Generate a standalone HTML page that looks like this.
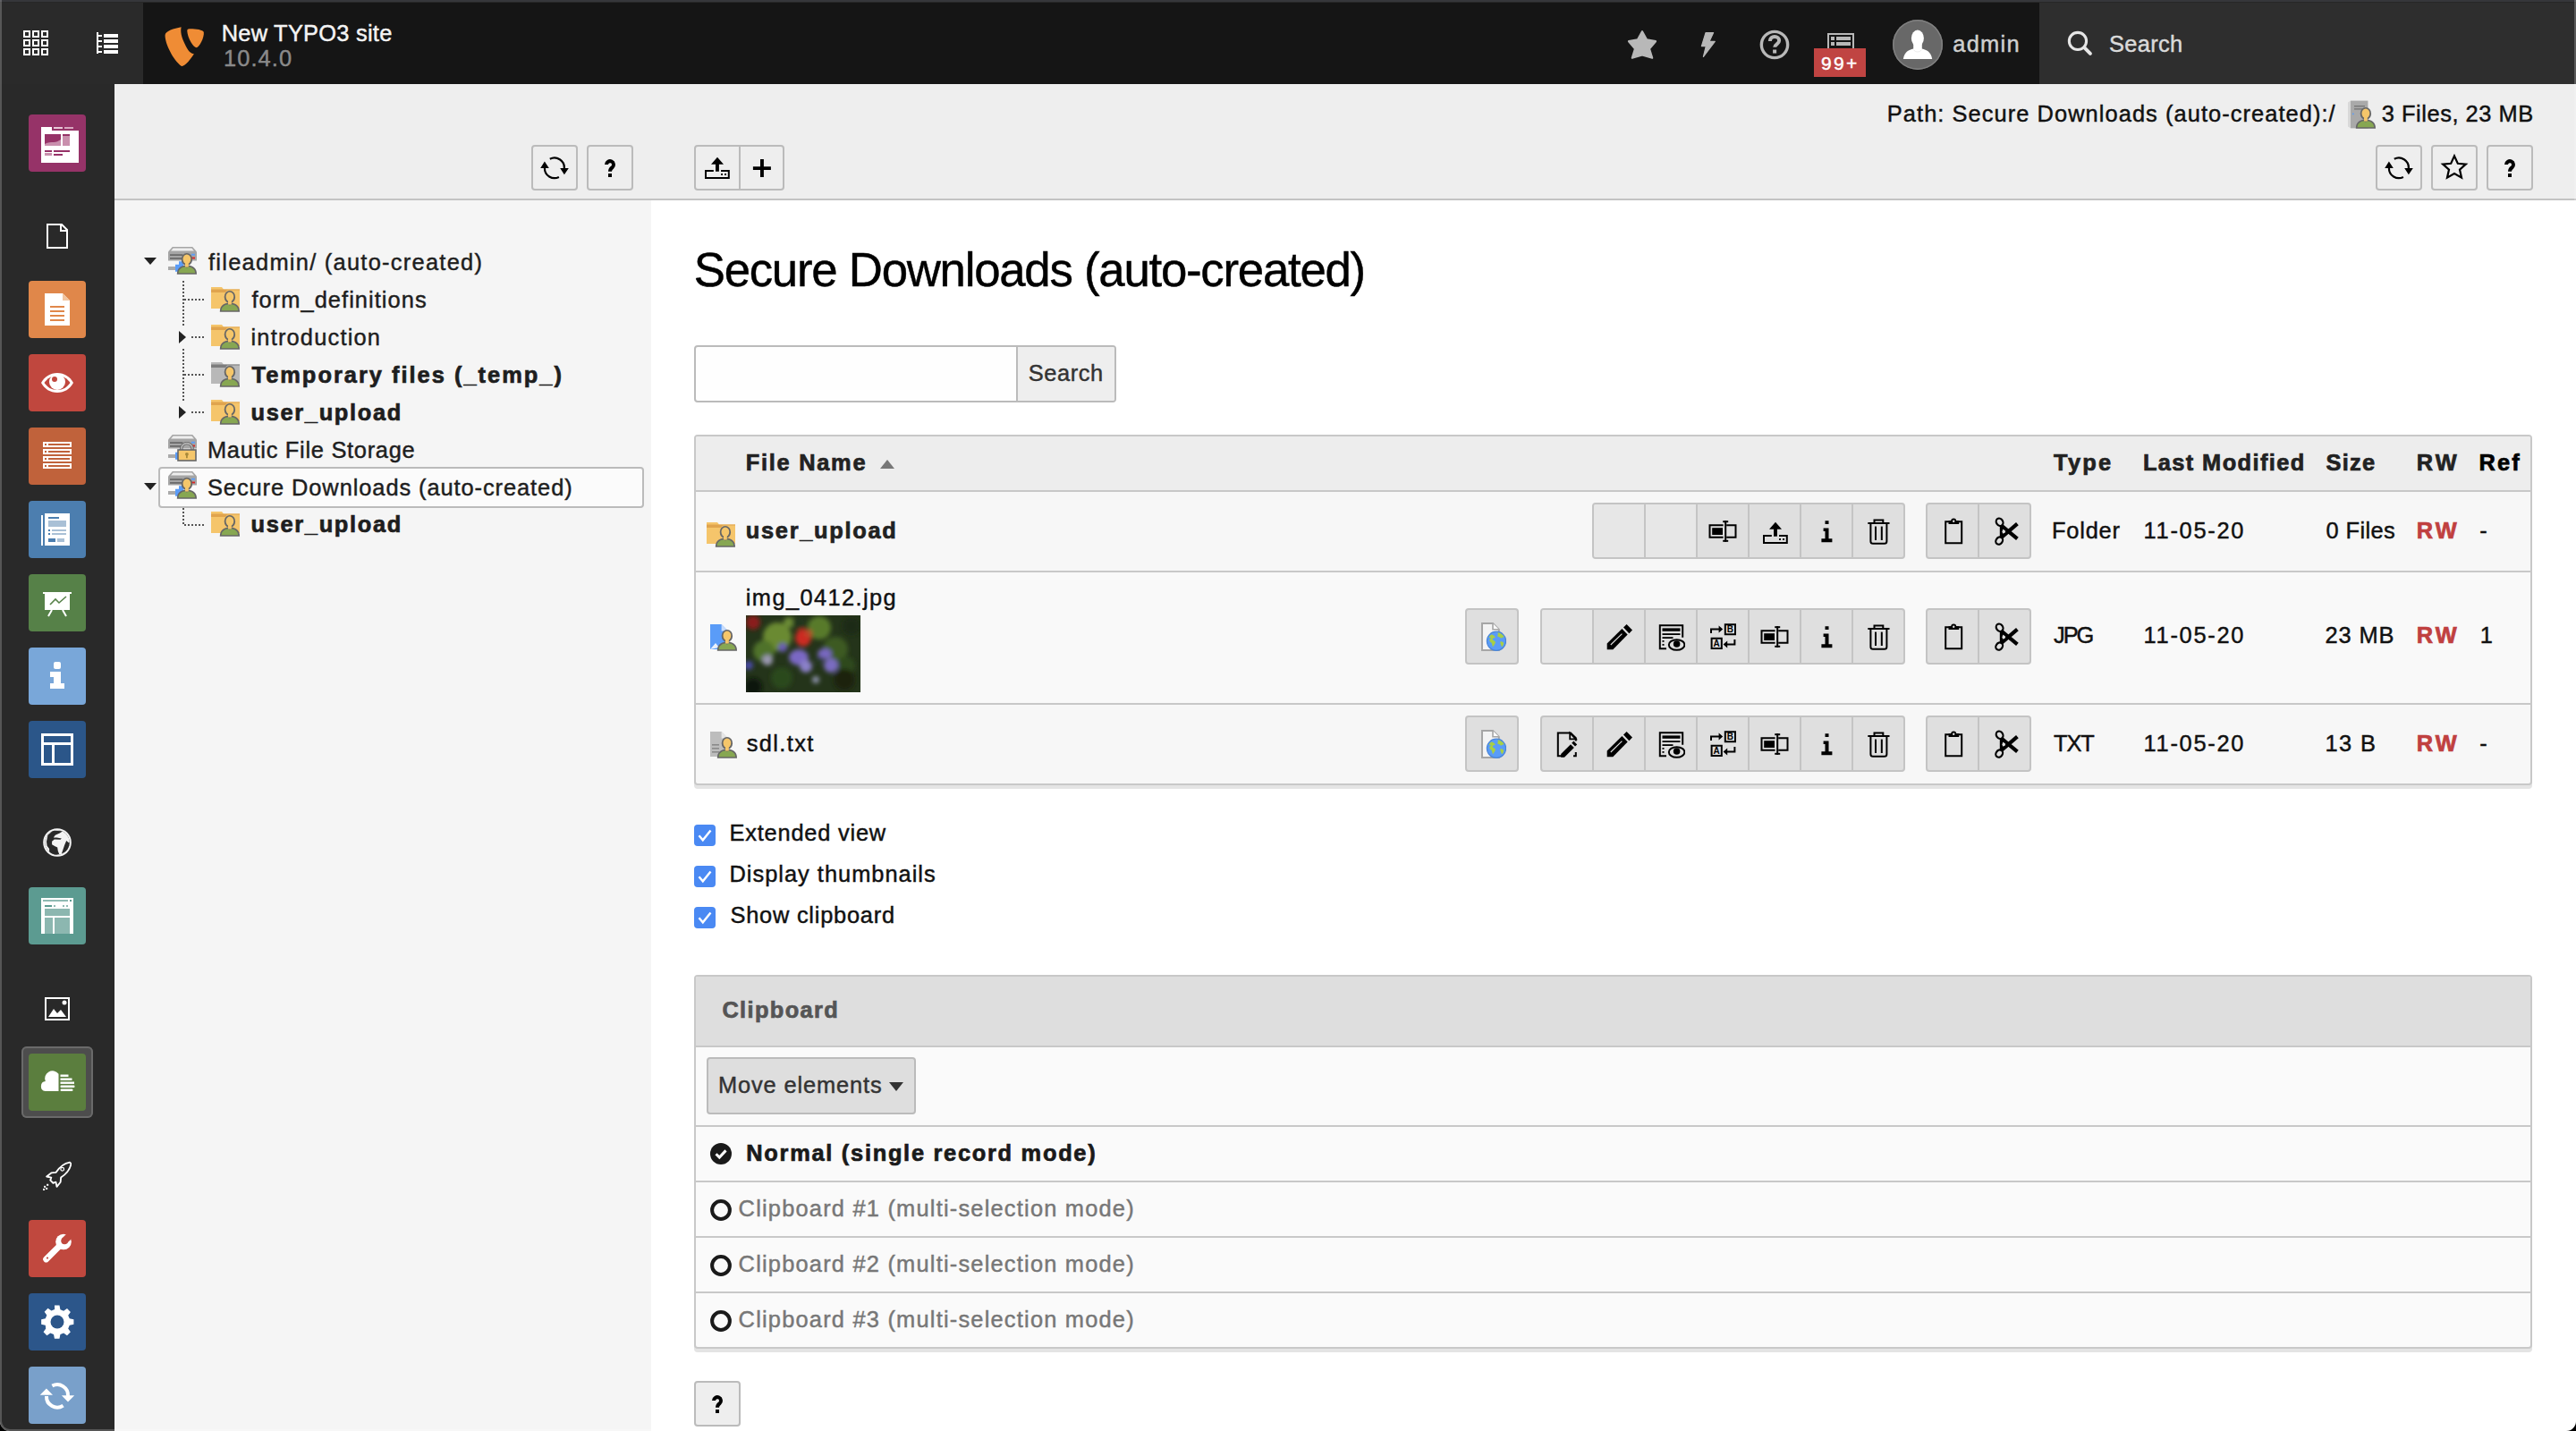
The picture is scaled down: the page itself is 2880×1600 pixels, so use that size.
<!DOCTYPE html>
<html><head><meta charset="utf-8"><style>
html,body{margin:0;padding:0;background:#000;}
body{width:2880px;height:1600px;overflow:hidden;position:relative;font-family:"Liberation Sans",sans-serif;}
.a{position:absolute;}
.t{white-space:pre;line-height:1;-webkit-text-stroke:0.45px currentColor;}
.b{-webkit-text-stroke:0.7px currentColor;}
#pg{position:absolute;left:0;top:0;width:2880px;height:1600px;overflow:hidden;border-radius:0 0 11px 11px;background:#fff;}
</style></head><body><div id="pg">
<div class="a" style="left:0px;top:0px;width:2880px;height:2px;background:#36373b"></div>
<div class="a" style="left:0px;top:2px;width:2880px;height:1px;background:#272727"></div>
<div class="a" style="left:0px;top:3px;width:160px;height:91px;background:#2a2a2a"></div>
<div class="a" style="left:160px;top:3px;width:2120px;height:91px;background:#151515"></div>
<div class="a" style="left:2280px;top:3px;width:600px;height:91px;background:#2e2e2e"></div>
<svg class="a" style="left:26px;top:34px" width="28" height="28" viewBox="0 0 28 28"><rect x="1" y="1" width="6" height="6" fill="none" stroke="#fff" stroke-width="2"/><rect x="1" y="11" width="6" height="6" fill="none" stroke="#fff" stroke-width="2"/><rect x="1" y="21" width="6" height="6" fill="none" stroke="#fff" stroke-width="2"/><rect x="11" y="1" width="6" height="6" fill="none" stroke="#fff" stroke-width="2"/><rect x="11" y="11" width="6" height="6" fill="none" stroke="#fff" stroke-width="2"/><rect x="11" y="21" width="6" height="6" fill="none" stroke="#fff" stroke-width="2"/><rect x="21" y="1" width="6" height="6" fill="none" stroke="#fff" stroke-width="2"/><rect x="21" y="11" width="6" height="6" fill="none" stroke="#fff" stroke-width="2"/><rect x="21" y="21" width="6" height="6" fill="none" stroke="#fff" stroke-width="2"/></svg>
<svg class="a" style="left:107px;top:36px" width="26" height="24" viewBox="0 0 26 24"><rect x="1" y="0" width="2" height="24" fill="#fff"/><rect x="1" y="3" width="6" height="2" fill="#fff"/><rect x="1" y="9" width="6" height="2" fill="#fff"/><rect x="1" y="15" width="6" height="2" fill="#fff"/><rect x="1" y="21" width="6" height="2" fill="#fff"/><rect x="9" y="2" width="16" height="4" fill="#fff"/><rect x="9" y="8" width="16" height="4" fill="#fff"/><rect x="9" y="14" width="16" height="4" fill="#fff"/><rect x="9" y="20" width="16" height="4" fill="#fff"/></svg>
<svg class="a" style="left:176px;top:24px" width="60" height="56" viewBox="0 0 60 56"><path fill="#ef8c35" d="M26.6,6.3 C18,8 9.5,10.5 8.6,15 C8,24 18,44 27,49.9 C31,50.5 37,42 40.9,36.2 C38,36 35,34 32,28 C29,22 25,14 26.6,6.3 Z"/><path fill="#ef8c35" d="M34.5,8.4 C40,8 51,9 51.8,12 C52.5,18 47,28.5 43.8,29.2 C40,29.2 34,19 33.3,11 C33.2,9.5 33.6,8.5 34.5,8.4 Z"/></svg>
<div class="a t" style="left:247.70px;top:24.80px;font-size:25.4px;font-weight:400;color:#f4f4f4;letter-spacing:0.258px;">New TYPO3 site</div>
<div class="a t" style="left:249.90px;top:53.00px;font-size:25.4px;font-weight:400;color:#8a8a8a;letter-spacing:1.126px;">10.4.0</div>
<svg class="a" style="left:1816px;top:30px;" width="40" height="40" viewBox="0 0 40 40"><path fill="#b8b8b8" stroke="#b8b8b8" stroke-width="2.200" stroke-linejoin="round" d="M20 5.200L25 14.400 35 16.200 28 24.600 31.200 34.800 20 31.400 8.800 34.800 12 24.600 5 16.200 15 14.400Z"/></svg>
<svg class="a" style="left:1896px;top:30px;" width="28" height="40" viewBox="0 0 28 40"><path fill="#b8b8b8" stroke="#b8b8b8" stroke-width="1.200" stroke-linejoin="round" d="M11 6.600H19.600L15 16.400H21.300L8.400 33.400 11.300 21.600H6.400Z"/></svg>
<svg class="a" style="left:1967px;top:33px;" width="34" height="34" viewBox="0 0 16 16"><circle cx="8" cy="8" r="6.9" fill="none" stroke="#b8b8b8" stroke-width="1.6"/><path fill="none" stroke="#b8b8b8" stroke-width="1.9" d="M5.6 6.1c0-1.5 1.1-2.3 2.4-2.3 1.4 0 2.4.9 2.4 2.1 0 1.7-2.3 1.8-2.3 3.4"/><rect x="7.1" y="10.6" width="1.9" height="1.9" fill="#b8b8b8"/></svg>
<svg class="a" style="left:2043px;top:37px;" width="30" height="18" viewBox="0 0 15 9"><path fill="none" stroke="#b8b8b8" stroke-width="1" d="M.5 .5h14v9h-14z"/><rect x="2" y="2" width="2" height="2" fill="#b8b8b8"/><rect x="5" y="2" width="8" height="2" fill="#b8b8b8"/><rect x="2" y="5" width="2" height="2" fill="#b8b8b8"/><rect x="5" y="5" width="8" height="2" fill="#b8b8b8"/></svg>
<div class="a" style="left:2028px;top:54px;width:58px;height:32px;background:#c04442"></div>
<div class="a t" style="left:2036.00px;top:59.50px;font-size:21px;font-weight:400;color:#fff;letter-spacing:2.321px;">99+</div>
<div class="a" style="left:2116px;top:22px;width:56px;height:56px;background:#686868;border-radius:50%;box-shadow:inset 0 0 0 1.500px #808080"></div>
<svg class="a" style="left:2116px;top:22px;" width="56" height="56" viewBox="0 0 56 56"><ellipse cx="27.900" cy="20.800" rx="7" ry="9.200" fill="#fff"/><rect x="23.200" y="26" width="9.600" height="9" fill="#fff"/><path fill="#fff" d="M23.200 32.600C18 34 13.500 35.500 11.800 44H44.200C42.500 35.500 38 34 32.800 32.600z"/><path fill="none" stroke="#ddd" stroke-width=".6" d="M23.300 33.600c1.500 1.800 3 2.400 4.600 2.400s3.100-.6 4.600-2.400"/></svg>
<div class="a t" style="left:2183.30px;top:37.00px;font-size:25.4px;font-weight:400;color:#cfcfcf;letter-spacing:1.267px;">admin</div>
<svg class="a" style="left:2311px;top:34px;" width="29" height="29" viewBox="0 0 16 16"><circle cx="6.6" cy="6.6" r="5.3" fill="none" stroke="#e6e6e6" stroke-width="1.7"/><path stroke="#e6e6e6" stroke-width="2.2" stroke-linecap="round" d="M10.6 10.6l3.7 3.7"/></svg>
<div class="a t" style="left:2358.00px;top:37.00px;font-size:25.4px;font-weight:400;color:#dadada;letter-spacing:0.334px;">Search</div>
<div class="a" style="left:0px;top:94px;width:128px;height:1506px;background:#292929"></div>
<svg class="a" style="left:32px;top:128px;" width="64" height="64" viewBox="0 0 64 64"><rect width="64" height="64" rx="4" fill="#963368"/><path fill="#fff" d="M14 14h12v4h30v36H14z"/><rect x="28" y="14" width="10" height="2" fill="#e8c8d8"/><rect x="40" y="14" width="10" height="2" fill="#d8a8c0"/><path fill="#c98fad" d="M18 22h18v13H18z"/><path fill="#963368" d="M18 22h18v6c-3 2-5 3-8 3-3 0-6 0-10 2z"/><rect x="38" y="22" width="8" height="13" fill="#c98fad"/><rect x="38" y="22" width="8" height="2" fill="#963368"/><rect x="18" y="40" width="8" height="2" fill="#963368"/><rect x="18" y="43" width="8" height="3" fill="#c98fad"/><rect x="28" y="40" width="18" height="2" fill="#963368"/><rect x="28" y="44" width="10" height="2" fill="#963368"/></svg>
<svg class="a" style="left:52px;top:250px;" width="24" height="28" viewBox="0 0 24 28"><path fill="none" stroke="#fff" stroke-width="2" d="M1 1h16l6 6v20H1z M16 1v7h7"/></svg>
<svg class="a" style="left:32px;top:314px;" width="64" height="64" viewBox="0 0 64 64"><rect width="64" height="64" rx="4" fill="#e0874a"/><path fill="#fff" d="M18 14h20l8 8v28H18z"/><path fill="#f2c49e" d="M38 14l8 8h-8z"/><g fill="#e0874a"><rect x="24" y="28" width="16" height="2"/><rect x="24" y="33" width="16" height="2"/><rect x="24" y="38" width="16" height="2"/><rect x="24" y="43" width="16" height="2"/></g></svg>
<svg class="a" style="left:32px;top:396px;" width="64" height="64" viewBox="0 0 64 64"><rect width="64" height="64" rx="4" fill="#c0473e"/><path fill="#fff" d="M14 32c4-7 10-11 18-11s14 4 18 11c-4 7-10 11-18 11s-14-4-18-11z"/><path fill="#c0473e" d="M17.5 32c3.5-5 8-8 14.5-8s11 3 14.5 8c-3.5 5-8 8-14.5 8s-11-3-14.5-8z"/><circle cx="32" cy="31" r="9" fill="#fff"/><circle cx="29" cy="28" r="3" fill="#c0473e"/></svg>
<svg class="a" style="left:32px;top:478px;" width="64" height="64" viewBox="0 0 64 64"><rect width="64" height="64" rx="4" fill="#c0623b"/><g fill="#fff"><rect x="16" y="16" width="32" height="6"/><rect x="16" y="24" width="32" height="6"/><rect x="16" y="32" width="32" height="6"/><rect x="16" y="40" width="32" height="6"/></g><g fill="#c0623b"><rect x="18" y="18" width="2" height="2"/><rect x="18" y="26" width="2" height="2"/><rect x="18" y="34" width="2" height="2"/><rect x="18" y="42" width="2" height="2"/><rect x="22" y="18" width="24" height="2"/><rect x="22" y="26" width="24" height="2"/><rect x="22" y="34" width="24" height="2"/><rect x="22" y="42" width="24" height="2"/></g></svg>
<svg class="a" style="left:32px;top:560px;" width="64" height="64" viewBox="0 0 64 64"><rect width="64" height="64" rx="4" fill="#4c7eaf"/><rect x="14" y="16" width="2" height="34" fill="#fff"/><path fill="#fff" d="M18 14h28v36H18z"/><rect x="22" y="18" width="12" height="2" fill="#4c7eaf"/><rect x="22" y="22" width="20" height="7" fill="#a9c0d6"/><rect x="22" y="32" width="2" height="2" fill="#4c7eaf"/><rect x="26" y="32" width="16" height="2" fill="#a9c0d6"/><rect x="22" y="36" width="2" height="2" fill="#4c7eaf"/><rect x="26" y="36" width="16" height="2" fill="#a9c0d6"/><rect x="22" y="42" width="8" height="4" fill="#4c7eaf"/><rect x="32" y="42" width="8" height="4" fill="#a9c0d6"/></svg>
<svg class="a" style="left:32px;top:642px;" width="64" height="64" viewBox="0 0 64 64"><rect width="64" height="64" rx="4" fill="#568148"/><rect x="16" y="20" width="32" height="2" fill="#fff"/><rect x="18" y="22" width="28" height="18" fill="#fff"/><path fill="none" stroke="#568148" stroke-width="1.6" d="M24 34l6-6 4 4 8-7"/><path stroke="#fff" stroke-width="2" d="M26 40l-4 7M38 40l4 7"/></svg>
<svg class="a" style="left:32px;top:724px;" width="64" height="64" viewBox="0 0 64 64"><rect width="64" height="64" rx="4" fill="#79a7d9"/><g fill="#fff"><rect x="28" y="16" width="8" height="8" rx="2"/><path d="M24 27h12v13h4v6H24v-6h4v-7h-4z"/></g></svg>
<svg class="a" style="left:32px;top:806px;" width="64" height="64" viewBox="0 0 64 64"><rect width="64" height="64" rx="4" fill="#2b5689"/><path fill="#fff" d="M14 14h36v36H14z"/><path fill="#2b5689" d="M17 17h30v7H17zM17 27h9v20h-9zM29 27h18v20H29z"/></svg>
<svg class="a" style="left:48px;top:926px;" width="32" height="32" viewBox="0 0 32 32"><circle cx="16" cy="16" r="15.800" fill="#f4f4f4"/><circle cx="16" cy="16" r="13.700" fill="#292929"/><clipPath id="gc"><circle cx="16" cy="16" r="13.700"/></clipPath><g clip-path="url(#gc)"><path fill="#f4f4f4" d="M0 0h32v32H0z"/><path fill="#292929" d="M10.800 2.700L22.200 3.200 18.800 5.400 13.800 7.800 11.800 10.500 15.500 10.500 20.900 11.500 19.500 12.800 12.800 12.500 10.100 14.800 10.100 18.200 13.500 20.200 16.200 21.500 16.800 25.600 18.200 28.900 12.100 31 7.100 26.600 7.100 22.900 4.600 19.800 4 15 5.500 7.400 8.100 5.400Z"/><path fill="#292929" d="M26.200 14.100L28.900 16.200 30.500 15 30 22.200 25.200 26.600 20.900 28.400 24.200 18.800Z"/></g></svg>
<svg class="a" style="left:32px;top:992px;" width="64" height="64" viewBox="0 0 64 64"><rect width="64" height="64" rx="4" fill="#5c9b91"/><path fill="#fff" d="M14 12h36v40H14z"/><rect x="16" y="14" width="28" height="2" fill="#8fbab3"/><rect x="46" y="14" width="2" height="2" fill="#5c9b91"/><rect x="18" y="20" width="8" height="2" fill="#5c9b91"/><rect x="28" y="20" width="2" height="2" fill="#8fbab3"/><rect x="38" y="20" width="2" height="2" fill="#8fbab3"/><rect x="42" y="20" width="2" height="2" fill="#8fbab3"/><rect x="18" y="24" width="28" height="8" fill="#8cb7b0"/><rect x="18" y="34" width="9" height="18" fill="#8cb7b0"/><rect x="29" y="34" width="17" height="18" fill="#8cb7b0"/></svg>
<svg class="a" style="left:50px;top:1115px;" width="28" height="26" viewBox="0 0 28 26"><path fill="none" stroke="#fff" stroke-width="2" d="M1 1h26v24H1z"/><path fill="#fff" d="M4 22l6-9 4 5 4-4 6 8z"/><circle cx="22" cy="6" r="2.5" fill="#fff"/></svg>
<div class="a" style="left:24px;top:1170px;width:80px;height:80px;background:#4d4d4d;border-radius:6px;box-shadow:inset 0 0 0 2px #6a6a6a"></div>
<svg class="a" style="left:32px;top:1178px;" width="64" height="64" viewBox="0 0 64 64"><rect width="64" height="64" rx="4" fill="#5b7e3e"/><path fill="#fff" d="M33.500 42H18.500A5.500 5.500 0 0 1 18.800 31.100A8.500 8.500 0 0 1 33.500 22.800Z"/><g fill="#fff"><rect x="35.500" y="23.500" width="9" height="2.400"/><rect x="35.500" y="27.500" width="13" height="2.400"/><rect x="35.500" y="31.500" width="15.500" height="2.400"/><rect x="35.500" y="35.500" width="16" height="2.400" rx="1"/><rect x="35.500" y="39.500" width="14" height="2.500" rx="1.200"/></g></svg>
<svg class="a" style="left:47px;top:1298px;" width="33" height="33" viewBox="0 0 32 32"><path fill="none" stroke="#fff" stroke-width="1.8" stroke-linejoin="round" d="M30 1.5c-6 1-11 5-15 11l-5 .5-5 4 5 1-1 3 3 3 3-1 1 5 4-5 .5-5c6-4 10-9 11-15z"/><circle cx="22" cy="9" r="1.8" fill="none" stroke="#fff" stroke-width="1.2"/><g fill="#fff"><rect x="2" y="27" width="2" height="2"/><rect x="4" y="29" width="2" height="2"/><rect x="1" y="30" width="2" height="2"/><rect x="5" y="25" width="2" height="2"/></g></svg>
<svg class="a" style="left:32px;top:1364px;" width="64" height="64" viewBox="0 0 64 64"><rect width="64" height="64" rx="4" fill="#c0483e"/><mask id="wm"><rect width="64" height="64" fill="#fff"/><circle cx="40.200" cy="23.300" r="3.900" fill="#000"/><rect x="36.300" y="9" width="7.800" height="14.300" fill="#000" transform="rotate(45 40.200 23.300)"/></mask><g mask="url(#wm)"><circle cx="39" cy="24.500" r="8.800" fill="#fff"/></g><path stroke="#fff" stroke-width="6.800" stroke-linecap="round" d="M34 29.600L19.600 44"/><circle cx="21" cy="42.600" r="1.100" fill="#c0483e"/></svg>
<svg class="a" style="left:32px;top:1446px;" width="64" height="64" viewBox="0 0 64 64"><rect width="64" height="64" rx="4" fill="#2c568a"/><g transform="translate(32 32) scale(.925) translate(-32.300 -32)"><path fill="#fff" d="M29 15h6l1 5 4 1.7 4.200-2.900 4.200 4.200-2.900 4.200L47.200 31l5 1v6l-5 1-1.700 4 2.900 4.200-4.200 4.200-4.200-2.900-4 1.700-1 5h-6l-1-5-4-1.700-4.200 2.900-4.200-4.200 2.900-4.200L18 39l-5-1v-6l5-1 1.700-4-2.900-4.200 4.200-4.200 4.200 2.900 4-1.700z" transform="translate(0,-3)"/></g><circle cx="32" cy="32" r="7.500" fill="#2c568a"/></svg>
<svg class="a" style="left:32px;top:1528px;" width="64" height="64" viewBox="0 0 64 64"><rect width="64" height="64" rx="4" fill="#79a0ca"/><path fill="none" stroke="#fff" stroke-width="4" d="M26.400 21.500A12 12 0 0 1 44 33M20 33A12 12 0 0 0 38.600 43.600"/><path fill="#fff" d="M36.900 32.200h14.300L44 39.400zM12.700 31.800h14.300L19.900 24.600z"/></svg>
<div class="a" style="left:128px;top:94px;width:2752px;height:128px;background:#eeeeee"></div>
<div class="a" style="left:128px;top:222px;width:2752px;height:2px;background:#c3c3c3"></div>
<div class="a" style="left:594px;top:162px;width:52px;height:51px;background:#eeeeee;border:2px solid #bbbbbb;border-radius:4px;box-sizing:border-box"></div>
<svg class="a" style="left:604px;top:171px;" width="32" height="32" viewBox="0 0 16 16"><path fill="none" stroke="#000" stroke-width="1.1" d="M5.400 3.400A5.500 5.500 0 0 1 13.450 8.500M2.450 8.500A5.500 5.500 0 0 0 10.450 13.450"/><path d="M11.100 8.500h4.800l-2.450 3.600zM.1 8.500h4.800L2.450 4.700z"/></svg>
<div class="a" style="left:656px;top:162px;width:52px;height:51px;background:#eeeeee;border:2px solid #bbbbbb;border-radius:4px;box-sizing:border-box"></div>
<svg class="a" style="left:666px;top:171px;" width="32" height="32" viewBox="0 0 16 16"><path fill="none" stroke="#000" stroke-width="2" d="M6 6.500A2 2 0 1 1 9.300 8.100C8.400 8.800 8 9.300 8 10.400"/><rect x="7" y="11.500" width="2" height="2"/></svg>
<div class="a" style="left:776px;top:162px;width:101px;height:51px;background:#eeeeee;border:2px solid #bbbbbb;border-radius:4px;box-sizing:border-box"></div>
<div class="a" style="left:826px;top:162px;width:2px;height:51px;background:#bbbbbb"></div>
<svg class="a" style="left:785px;top:170px;" width="32" height="32" viewBox="0 0 16 16"><path d="M8.500 2.900L12 6.900H9.450V10.900H7.500V6.900H5z"/><path fill="none" stroke="#000" stroke-width="1" d="M6.400 10.500H2v4h12.900v-4h-4.400"/><rect x="10.550" y="12" width=".95" height="1"/><rect x="12.550" y="12" width=".95" height="1"/></svg>
<svg class="a" style="left:836px;top:170px;" width="32" height="32" viewBox="0 0 16 16"><path d="M7 4h1.950v4.100h4v1.900h-4v3.950H7V10H2.950V8.100H7z"/></svg>
<div class="a" style="left:2656px;top:162px;width:52px;height:51px;background:#eeeeee;border:2px solid #bbbbbb;border-radius:4px;box-sizing:border-box"></div>
<svg class="a" style="left:2666px;top:171px;" width="32" height="32" viewBox="0 0 16 16"><path fill="none" stroke="#000" stroke-width="1.1" d="M5.400 3.400A5.500 5.500 0 0 1 13.450 8.500M2.450 8.500A5.500 5.500 0 0 0 10.450 13.450"/><path d="M11.100 8.500h4.800l-2.450 3.600zM.1 8.500h4.800L2.450 4.700z"/></svg>
<div class="a" style="left:2718px;top:162px;width:52px;height:51px;background:#eeeeee;border:2px solid #bbbbbb;border-radius:4px;box-sizing:border-box"></div>
<svg class="a" style="left:2728px;top:171px;" width="32" height="32" viewBox="0 0 16 16"><path fill="none" stroke="#000" stroke-width="1.1" stroke-linejoin="miter" d="M8 1.700l1.900 4.200 4.500.4-3.400 3 1 4.500L8 11.500l-4 2.300 1-4.500-3.400-3 4.500-.4z"/></svg>
<div class="a" style="left:2780px;top:162px;width:52px;height:51px;background:#eeeeee;border:2px solid #bbbbbb;border-radius:4px;box-sizing:border-box"></div>
<svg class="a" style="left:2790px;top:171px;" width="32" height="32" viewBox="0 0 16 16"><path fill="none" stroke="#000" stroke-width="2" d="M6 6.500A2 2 0 1 1 9.300 8.100C8.400 8.800 8 9.300 8 10.400"/><rect x="7" y="11.500" width="2" height="2"/></svg>
<div class="a t" style="left:2109.80px;top:115.30px;font-size:25.4px;font-weight:400;color:#111;letter-spacing:1.073px;">Path: Secure Downloads (auto-created):/</div>
<div class="a t" style="left:2662.70px;top:115.30px;font-size:25.4px;font-weight:400;color:#111;letter-spacing:0.559px;">3 Files, 23 MB</div>
<div class="a" style="left:128px;top:224px;width:600px;height:1376px;background:#f5f5f5"></div>
<div class="a" style="left:177px;top:522px;width:543px;height:46px;background:#fbfbfb;border:2px solid #bbbbbb;border-radius:4px;box-sizing:border-box"></div>
<svg class="a" style="left:161px;top:288px;" width="14" height="8" viewBox="0 0 14 8"><path fill="#222" d="M0 0h14L7 8z"/></svg>
<svg class="a" style="left:161px;top:540px;" width="14" height="8" viewBox="0 0 14 8"><path fill="#222" d="M0 0h14L7 8z"/></svg>
<svg class="a" style="left:200px;top:370px;" width="8" height="14" viewBox="0 0 8 14"><path fill="#222" d="M0 0l8 7-8 7z"/></svg>
<svg class="a" style="left:200px;top:454px;" width="8" height="14" viewBox="0 0 8 14"><path fill="#222" d="M0 0l8 7-8 7z"/></svg>
<div class="a" style="left:204px;top:314px;width:2px;height:50px;background-image:repeating-linear-gradient(to bottom,#555 0 2px,transparent 2px 4px)"></div>
<div class="a" style="left:204px;top:390px;width:2px;height:58px;background-image:repeating-linear-gradient(to bottom,#555 0 2px,transparent 2px 4px)"></div>
<div class="a" style="left:206px;top:334px;width:22px;height:2px;background-image:repeating-linear-gradient(to right,#555 0 2px,transparent 2px 4px)"></div>
<div class="a" style="left:214px;top:376px;width:14px;height:2px;background-image:repeating-linear-gradient(to right,#555 0 2px,transparent 2px 4px)"></div>
<div class="a" style="left:206px;top:418px;width:22px;height:2px;background-image:repeating-linear-gradient(to right,#555 0 2px,transparent 2px 4px)"></div>
<div class="a" style="left:214px;top:460px;width:14px;height:2px;background-image:repeating-linear-gradient(to right,#555 0 2px,transparent 2px 4px)"></div>
<div class="a" style="left:204px;top:568px;width:2px;height:20px;background-image:repeating-linear-gradient(to bottom,#555 0 2px,transparent 2px 4px)"></div>
<div class="a" style="left:206px;top:586px;width:22px;height:2px;background-image:repeating-linear-gradient(to right,#555 0 2px,transparent 2px 4px)"></div>
<svg class="a" style="left:188px;top:275px" width="32" height="32" viewBox="0 0 16 16"><path fill="#a5a5a5" d="M2.400 .5h11.200L16 3.300V8.300H0V3.300z"/><path fill="#eee" d="M2.800 1.200h10.400l1.300 1.600H1.500z"/><rect x="1" y="4.600" width="7.200" height=".9" fill="#6b6b6b"/><rect x="1" y="6.500" width="7.200" height=".9" fill="#6b6b6b"/><rect x="13" y="4.400" width="2" height=".9" fill="#5a9cf8"/><rect x="13" y="6.300" width="2" height=".9" fill="#d22"/><rect x="0" y="11.500" width="4.800" height="2" fill="#aaa"/><path fill="#5a9cf8" d="M4 10.400h2V8.600h2.600v4.600H6v1.200H4z"/><ellipse cx="10.450" cy="7.500" rx="3.100" ry="3.500" fill="#666"/><path fill="#666" d="M4.900 15.900C4.900 12.300 7 11.500 8.800 10.900h3.300c1.800.6 3.900 1.400 3.900 5z"/><ellipse cx="10.450" cy="7.400" rx="2.200" ry="2.600" fill="#f5c66a"/><rect x="9.500" y="9" width="1.900" height="2.800" fill="#f5c66a"/><path fill="#87a752" d="M5.800 15.100c.2-2.300 1.700-3 3.400-3.500l1.250.7 1.250-.7c1.700.5 3.200 1.200 3.400 3.500z"/></svg>
<svg class="a" style="left:236px;top:317px" width="32" height="32" viewBox="0 0 16 16"><path fill="#f5c56b" d="M0 2h6l1 1.200h9V14H0z"/><path fill="#e0a44e" d="M0 3.200h16v.600H9L8 5H0z"/><ellipse cx="10.450" cy="7.500" rx="3.100" ry="3.500" fill="#666"/><path fill="#666" d="M4.900 15.900C4.900 12.300 7 11.500 8.800 10.900h3.300c1.800.6 3.900 1.400 3.900 5z"/><ellipse cx="10.450" cy="7.400" rx="2.200" ry="2.600" fill="#f5c66a"/><rect x="9.500" y="9" width="1.900" height="2.800" fill="#f5c66a"/><path fill="#87a752" d="M5.800 15.100c.2-2.300 1.700-3 3.400-3.500l1.250.7 1.250-.7c1.700.5 3.200 1.200 3.400 3.500z"/></svg>
<svg class="a" style="left:236px;top:359px" width="32" height="32" viewBox="0 0 16 16"><path fill="#f5c56b" d="M0 2h6l1 1.200h9V14H0z"/><path fill="#e0a44e" d="M0 3.200h16v.600H9L8 5H0z"/><ellipse cx="10.450" cy="7.500" rx="3.100" ry="3.500" fill="#666"/><path fill="#666" d="M4.900 15.900C4.900 12.300 7 11.500 8.800 10.900h3.300c1.800.6 3.900 1.400 3.900 5z"/><ellipse cx="10.450" cy="7.400" rx="2.200" ry="2.600" fill="#f5c66a"/><rect x="9.500" y="9" width="1.900" height="2.800" fill="#f5c66a"/><path fill="#87a752" d="M5.800 15.100c.2-2.300 1.700-3 3.400-3.500l1.250.7 1.250-.7c1.700.5 3.200 1.200 3.400 3.500z"/></svg>
<svg class="a" style="left:236px;top:401px" width="32" height="32" viewBox="0 0 16 16"><path fill="#b8b8b8" d="M0 2h6l1 1.200h9V14H0z"/><path fill="#7d7d7d" d="M0 3.200h16v.600H9L8 5H0z"/><ellipse cx="10.450" cy="7.500" rx="3.100" ry="3.500" fill="#666"/><path fill="#666" d="M4.900 15.900C4.900 12.300 7 11.500 8.800 10.900h3.300c1.800.6 3.900 1.400 3.900 5z"/><ellipse cx="10.450" cy="7.400" rx="2.200" ry="2.600" fill="#f5c66a"/><rect x="9.500" y="9" width="1.900" height="2.800" fill="#f5c66a"/><path fill="#87a752" d="M5.800 15.100c.2-2.300 1.700-3 3.400-3.500l1.250.7 1.250-.7c1.700.5 3.200 1.200 3.400 3.500z"/></svg>
<svg class="a" style="left:236px;top:443px" width="32" height="32" viewBox="0 0 16 16"><path fill="#f5c56b" d="M0 2h6l1 1.200h9V14H0z"/><path fill="#e0a44e" d="M0 3.200h16v.600H9L8 5H0z"/><ellipse cx="10.450" cy="7.500" rx="3.100" ry="3.500" fill="#666"/><path fill="#666" d="M4.900 15.900C4.900 12.300 7 11.500 8.800 10.900h3.300c1.800.6 3.900 1.400 3.900 5z"/><ellipse cx="10.450" cy="7.400" rx="2.200" ry="2.600" fill="#f5c66a"/><rect x="9.500" y="9" width="1.900" height="2.800" fill="#f5c66a"/><path fill="#87a752" d="M5.800 15.100c.2-2.300 1.700-3 3.400-3.500l1.250.7 1.250-.7c1.700.5 3.200 1.200 3.400 3.500z"/></svg>
<svg class="a" style="left:188px;top:485px" width="32" height="32" viewBox="0 0 16 16"><path fill="#a5a5a5" d="M2.400 .5h11.200L16 3.300V8.300H0V3.300z"/><path fill="#eee" d="M2.800 1.200h10.400l1.300 1.600H1.500z"/><rect x="1" y="4.600" width="7.200" height=".9" fill="#6b6b6b"/><rect x="1" y="6.500" width="7.200" height=".9" fill="#6b6b6b"/><rect x="13" y="4.400" width="2" height=".9" fill="#5a9cf8"/><rect x="13" y="6.300" width="2" height=".9" fill="#d22"/><rect x="0" y="11.500" width="4.800" height="2" fill="#aaa"/><path fill="#5a9cf8" d="M4 10.400h2V8.600h2.600v4.600H6v1.200H4z"/><circle cx="10.450" cy="8.400" r="3.100" fill="none" stroke="#666" stroke-width="1.700"/><circle cx="10.450" cy="8.400" r="3.100" fill="none" stroke="#b4b4b4" stroke-width=".800"/><path fill="#666" d="M5.100 8.600h10.800V15.400H5.100z"/><path fill="#f5c66a" d="M5.900 9.400h9.200V14.600H5.900z"/><circle cx="10.450" cy="11.400" r=".950" fill="#a8893a"/><path fill="#a8893a" d="M10 11.400h.900v2.200H10z"/></svg>
<svg class="a" style="left:188px;top:526px" width="32" height="32" viewBox="0 0 16 16"><path fill="#a5a5a5" d="M2.400 .5h11.200L16 3.300V8.300H0V3.300z"/><path fill="#eee" d="M2.800 1.200h10.400l1.300 1.600H1.500z"/><rect x="1" y="4.600" width="7.200" height=".9" fill="#6b6b6b"/><rect x="1" y="6.500" width="7.200" height=".9" fill="#6b6b6b"/><rect x="13" y="4.400" width="2" height=".9" fill="#5a9cf8"/><rect x="13" y="6.300" width="2" height=".9" fill="#d22"/><rect x="0" y="11.500" width="4.800" height="2" fill="#aaa"/><path fill="#5a9cf8" d="M4 10.400h2V8.600h2.600v4.600H6v1.200H4z"/><ellipse cx="10.450" cy="7.500" rx="3.100" ry="3.500" fill="#666"/><path fill="#666" d="M4.900 15.900C4.900 12.300 7 11.500 8.800 10.900h3.300c1.800.6 3.900 1.400 3.900 5z"/><ellipse cx="10.450" cy="7.400" rx="2.200" ry="2.600" fill="#f5c66a"/><rect x="9.500" y="9" width="1.900" height="2.800" fill="#f5c66a"/><path fill="#87a752" d="M5.800 15.100c.2-2.300 1.700-3 3.400-3.500l1.250.7 1.250-.7c1.700.5 3.200 1.200 3.400 3.500z"/></svg>
<svg class="a" style="left:236px;top:568px" width="32" height="32" viewBox="0 0 16 16"><path fill="#f5c56b" d="M0 2h6l1 1.200h9V14H0z"/><path fill="#e0a44e" d="M0 3.200h16v.600H9L8 5H0z"/><ellipse cx="10.450" cy="7.500" rx="3.100" ry="3.500" fill="#666"/><path fill="#666" d="M4.900 15.900C4.900 12.300 7 11.500 8.800 10.900h3.300c1.800.6 3.900 1.400 3.900 5z"/><ellipse cx="10.450" cy="7.400" rx="2.200" ry="2.600" fill="#f5c66a"/><rect x="9.500" y="9" width="1.900" height="2.800" fill="#f5c66a"/><path fill="#87a752" d="M5.800 15.100c.2-2.300 1.700-3 3.400-3.500l1.250.7 1.250-.7c1.700.5 3.200 1.200 3.400 3.500z"/></svg>
<div class="a t" style="left:233.00px;top:281.30px;font-size:25.4px;font-weight:400;color:#1e1e1e;letter-spacing:1.282px;">fileadmin/ (auto-created)</div>
<div class="a t" style="left:281.50px;top:323.30px;font-size:25.4px;font-weight:400;color:#1e1e1e;letter-spacing:1.057px;">form_definitions</div>
<div class="a t" style="left:280.50px;top:365.00px;font-size:25.4px;font-weight:400;color:#1e1e1e;letter-spacing:1.196px;">introduction</div>
<div class="a t b" style="left:281.50px;top:407.00px;font-size:25.4px;font-weight:700;color:#1e1e1e;letter-spacing:2.012px;">Temporary files (_temp_)</div>
<div class="a t b" style="left:280.50px;top:448.50px;font-size:25.4px;font-weight:700;color:#1e1e1e;letter-spacing:1.684px;">user_upload</div>
<div class="a t" style="left:232.00px;top:491.20px;font-size:25.4px;font-weight:400;color:#1e1e1e;letter-spacing:0.716px;">Mautic File Storage</div>
<div class="a t" style="left:232.00px;top:532.70px;font-size:25.4px;font-weight:400;color:#1e1e1e;letter-spacing:0.934px;">Secure Downloads (auto-created)</div>
<div class="a t b" style="left:280.50px;top:574.20px;font-size:25.4px;font-weight:700;color:#1e1e1e;letter-spacing:1.684px;">user_upload</div>
<div class="a t" style="left:775.70px;top:275.60px;font-size:52.8px;font-weight:400;color:#000;letter-spacing:-1.265px;">Secure Downloads (auto-created)</div>
<div class="a" style="left:776px;top:386px;width:472px;height:64px;background:#fefefe;border:2px solid #bbbbbb;border-radius:4px;box-sizing:border-box"></div>
<div class="a" style="left:1136px;top:388px;width:108px;height:60px;background:#eeeeee;border-left:2px solid #bbbbbb;border-radius:0 2px 2px 0"></div>
<div class="a t" style="left:1149.70px;top:404.90px;font-size:25.4px;font-weight:400;color:#333;letter-spacing:0.594px;">Search</div>
<div class="a" style="left:776px;top:486px;width:2055px;height:392px;border:2px solid #c8c8c8;border-radius:4px;box-sizing:border-box;background:#f7f7f7;box-shadow:0 4px 0 #e4e4e4"></div>
<div class="a" style="left:778px;top:488px;width:2051px;height:60px;background:#ededed;border-radius:2px 2px 0 0"></div>
<div class="a" style="left:778px;top:548px;width:2051px;height:2px;background:#c8c8c8"></div>
<div class="a" style="left:778px;top:640px;width:2051px;height:146px;background:#f9f9f9"></div>
<div class="a" style="left:778px;top:638px;width:2051px;height:2px;background:#c8c8c8"></div>
<div class="a" style="left:778px;top:786px;width:2051px;height:2px;background:#c8c8c8"></div>
<div class="a t b" style="left:833.80px;top:505.20px;font-size:25.4px;font-weight:700;color:#222;letter-spacing:1.722px;">File Name</div>
<svg class="a" style="left:984px;top:514px;" width="16" height="10" viewBox="0 0 16 10"><path fill="#777" d="M0 10L8 0l8 10z"/></svg>
<div class="a t b" style="left:2296.00px;top:505.20px;font-size:25.4px;font-weight:700;color:#222;letter-spacing:2.282px;">Type</div>
<div class="a t b" style="left:2395.90px;top:505.20px;font-size:25.4px;font-weight:700;color:#222;letter-spacing:1.390px;">Last Modified</div>
<div class="a t b" style="left:2600.60px;top:505.20px;font-size:25.4px;font-weight:700;color:#222;letter-spacing:1.205px;">Size</div>
<div class="a t b" style="left:2701.70px;top:505.20px;font-size:25.4px;font-weight:700;color:#222;letter-spacing:3.123px;">RW</div>
<div class="a t b" style="left:2771.50px;top:505.20px;font-size:25.4px;font-weight:700;color:#000;letter-spacing:2.121px;">Ref</div>
<div class="a t b" style="left:833.80px;top:581.20px;font-size:25.4px;font-weight:700;color:#222;letter-spacing:1.704px;">user_upload</div>
<div class="a t" style="left:833.80px;top:655.90px;font-size:25.4px;font-weight:400;color:#111;letter-spacing:1.397px;">img_0412.jpg</div>
<div class="a t" style="left:834.80px;top:818.50px;font-size:25.4px;font-weight:400;color:#111;letter-spacing:1.373px;">sdl.txt</div>
<div class="a t" style="left:2294.00px;top:580.90px;font-size:25.4px;font-weight:400;color:#111;letter-spacing:0.797px;">Folder</div>
<div class="a t" style="left:2396.60px;top:580.90px;font-size:25.4px;font-weight:400;color:#111;letter-spacing:1.724px;">11-05-20</div>
<div class="a t" style="left:2600.60px;top:580.90px;font-size:25.4px;font-weight:400;color:#111;letter-spacing:0.369px;">0 Files</div>
<div class="a t b" style="left:2701.70px;top:580.90px;font-size:25.4px;font-weight:700;color:#c04040;letter-spacing:3.123px;">RW</div>
<div class="a t" style="left:2772.30px;top:580.90px;font-size:25.4px;font-weight:400;color:#111;letter-spacing:0.000px;">-</div>
<div class="a t" style="left:2296.00px;top:698.30px;font-size:25.4px;font-weight:400;color:#111;letter-spacing:-2.065px;">JPG</div>
<div class="a t" style="left:2396.60px;top:698.30px;font-size:25.4px;font-weight:400;color:#111;letter-spacing:1.724px;">11-05-20</div>
<div class="a t" style="left:2599.60px;top:698.30px;font-size:25.4px;font-weight:400;color:#111;letter-spacing:0.888px;">23 MB</div>
<div class="a t b" style="left:2701.70px;top:698.30px;font-size:25.4px;font-weight:700;color:#c04040;letter-spacing:3.123px;">RW</div>
<div class="a t" style="left:2772.80px;top:698.30px;font-size:25.4px;font-weight:400;color:#111;letter-spacing:0.000px;">1</div>
<div class="a t" style="left:2296.00px;top:818.50px;font-size:25.4px;font-weight:400;color:#111;letter-spacing:-1.072px;">TXT</div>
<div class="a t" style="left:2396.60px;top:818.50px;font-size:25.4px;font-weight:400;color:#111;letter-spacing:1.724px;">11-05-20</div>
<div class="a t" style="left:2599.60px;top:818.50px;font-size:25.4px;font-weight:400;color:#111;letter-spacing:1.335px;">13 B</div>
<div class="a t b" style="left:2701.70px;top:818.50px;font-size:25.4px;font-weight:700;color:#c04040;letter-spacing:3.123px;">RW</div>
<div class="a t" style="left:2772.30px;top:818.50px;font-size:25.4px;font-weight:400;color:#111;letter-spacing:0.000px;">-</div>
<svg class="a" style="left:790px;top:580px" width="32" height="32" viewBox="0 0 16 16"><path fill="#f5c56b" d="M0 2h6l1 1.200h9V14H0z"/><path fill="#e0a44e" d="M0 3.200h16v.600H9L8 5H0z"/><ellipse cx="10.450" cy="7.500" rx="3.100" ry="3.500" fill="#666"/><path fill="#666" d="M4.900 15.900C4.900 12.300 7 11.500 8.800 10.900h3.300c1.800.6 3.900 1.400 3.900 5z"/><ellipse cx="10.450" cy="7.400" rx="2.200" ry="2.600" fill="#f5c66a"/><rect x="9.500" y="9" width="1.900" height="2.800" fill="#f5c66a"/><path fill="#87a752" d="M5.800 15.100c.2-2.300 1.700-3 3.400-3.500l1.250.7 1.250-.7c1.700.5 3.200 1.200 3.400 3.500z"/></svg>
<svg class="a" style="left:792px;top:696px" width="32" height="32" viewBox="0 0 16 16"><path fill="#5a9cf8" d="M1 1h6.300L11 4.700V15H1z"/><path fill="#c8dcfb" d="M7.300 1L11 4.700H7.300z"/><path fill="#e8f0fc" d="M1 15l3-3.500 2 2.500z"/><ellipse cx="10.450" cy="7.500" rx="3.100" ry="3.500" fill="#666"/><path fill="#666" d="M4.900 15.900C4.900 12.300 7 11.500 8.800 10.900h3.300c1.800.6 3.900 1.400 3.900 5z"/><ellipse cx="10.450" cy="7.400" rx="2.200" ry="2.600" fill="#f5c66a"/><rect x="9.500" y="9" width="1.900" height="2.800" fill="#f5c66a"/><path fill="#87a752" d="M5.800 15.100c.2-2.300 1.700-3 3.400-3.500l1.250.7 1.250-.7c1.700.5 3.200 1.200 3.400 3.500z"/></svg>
<svg class="a" style="left:792px;top:816px" width="32" height="32" viewBox="0 0 16 16"><path fill="#bdbdbd" d="M1 1h6.300L11 4.700V15H1z"/><path fill="#e6e6e6" d="M7.300 1L11 4.700H7.300z"/><g fill="#8a8a8a"><rect x="2" y="8" width="4" height=".8"/><rect x="2" y="10" width="4" height=".8"/><rect x="2" y="12" width="4" height=".8"/></g><ellipse cx="10.450" cy="7.500" rx="3.100" ry="3.500" fill="#666"/><path fill="#666" d="M4.900 15.900C4.900 12.300 7 11.500 8.800 10.900h3.300c1.800.6 3.900 1.400 3.900 5z"/><ellipse cx="10.450" cy="7.400" rx="2.200" ry="2.600" fill="#f5c66a"/><rect x="9.500" y="9" width="1.900" height="2.800" fill="#f5c66a"/><path fill="#87a752" d="M5.800 15.100c.2-2.300 1.700-3 3.400-3.500l1.250.7 1.250-.7c1.700.5 3.200 1.200 3.400 3.500z"/></svg>
<svg class="a" style="left:834px;top:688px" width="128" height="86" viewBox="0 0 128 86"><defs><filter id="bl" x="-20%" y="-20%" width="140%" height="140%"><feGaussianBlur stdDeviation="2.600"/></filter><clipPath id="cp"><rect width="128" height="86"/></clipPath></defs><rect width="128" height="86" fill="#24341a"/><g clip-path="url(#cp)"><g filter="url(#bl)"><circle cx="35" cy="24" r="16" fill="#6a8a30"/><circle cx="20" cy="40" r="12" fill="#50722a"/><circle cx="82" cy="14" r="13" fill="#587a2c"/><circle cx="100" cy="38" r="14" fill="#3c5a22"/><circle cx="112" cy="56" r="10" fill="#2e4a1e"/><circle cx="48" cy="8" r="6" fill="#6a8a34"/><circle cx="118" cy="12" r="10" fill="#1c2a12"/><circle cx="60" cy="8" r="8" fill="#24341a"/><circle cx="40" cy="70" r="12" fill="#2c4a1c"/><circle cx="110" cy="72" r="12" fill="#1a2410"/><circle cx="8" cy="80" r="10" fill="#0c140a"/><circle cx="8" cy="8" r="8" fill="#8a1c1a"/><ellipse cx="64" cy="25" rx="9" ry="10" fill="#cc2a22"/><circle cx="70" cy="20" r="4" fill="#b84a2a"/><circle cx="41" cy="36" r="5" fill="#6a5ab8"/><ellipse cx="59" cy="47" rx="11" ry="9" fill="#7a68c4"/><circle cx="67" cy="57" r="7" fill="#8a80c8"/><ellipse cx="88" cy="43" rx="8" ry="6" fill="#7868c0"/><circle cx="95" cy="56" r="8" fill="#7a6cc0"/><circle cx="24" cy="50" r="6" fill="#9a98b0"/><circle cx="3" cy="56" r="5" fill="#4a4aa8"/><circle cx="78" cy="72" r="4" fill="#8a90a8"/><circle cx="82" cy="50" r="4" fill="#2a3a2a"/></g></g></svg>
<div class="a" style="left:1780px;top:562px;width:350px;height:63px;background:#dfdfdf;border:2px solid #c4c4c4;border-radius:4px;box-sizing:border-box"></div>
<div class="a" style="left:1782px;top:564px;width:57px;height:59px;background:#e7e7e7;border-radius:2px 0 0 2px"></div>
<div class="a" style="left:1839px;top:564px;width:57px;height:59px;background:#e7e7e7"></div>
<div class="a" style="left:1838px;top:564px;width:2px;height:59px;background:#c4c4c4"></div>
<div class="a" style="left:1896px;top:564px;width:2px;height:59px;background:#c4c4c4"></div>
<svg class="a" style="left:1910px;top:578px" width="32" height="32" viewBox="0 0 16 16" fill="#000"><path fill="none" stroke="#000" stroke-width="1" d="M8.300 4.600H.750v6.800h7.550M10.100 4.600h5.150v6.800h-5.150"/><rect x="2.100" y="6.100" width="5.900" height="3.900"/><rect x="9.100" y="2.100" width="1" height="11.800"/><rect x="8.100" y="2.100" width="3" height="1"/><rect x="8.100" y="12.900" width="3" height="1"/></svg>
<div class="a" style="left:1954px;top:564px;width:2px;height:59px;background:#c4c4c4"></div>
<svg class="a" style="left:1968px;top:578px" width="32" height="32" viewBox="0 0 16 16" fill="#000"><path d="M8.500 2.900L12 6.900H9.450V10.900H7.500V6.900H5z"/><path fill="none" stroke="#000" stroke-width="1" d="M6.400 10.500H2v4h12.900v-4h-4.400"/><rect x="10.550" y="12" width=".95" height="1"/><rect x="12.550" y="12" width=".95" height="1"/></svg>
<div class="a" style="left:2012px;top:564px;width:2px;height:59px;background:#c4c4c4"></div>
<svg class="a" style="left:2026px;top:578px" width="32" height="32" viewBox="0 0 16 16" fill="#000"><path d="M7.250 2.100h2v1.900h-2zM6.300 6.200h2.950v5.900h1.950v2H5.200v-2h2.050V8H6.300z"/></svg>
<div class="a" style="left:2070px;top:564px;width:2px;height:59px;background:#c4c4c4"></div>
<svg class="a" style="left:2084px;top:578px" width="32" height="32" viewBox="0 0 16 16" fill="#000"><rect x="2.150" y="3" width="12.100" height="1"/><path fill="none" stroke="#000" stroke-width="1" d="M5.750 3V1.700h4.900V3M3.700 4v9.600c0 .8.500 1.300 1.300 1.300h6.400c.8 0 1.300-.5 1.300-1.300V4"/><rect x="6" y="5.300" width="1" height="7.700"/><rect x="9.400" y="5.300" width="1" height="7.700"/></svg>
<div class="a" style="left:2153px;top:562px;width:118px;height:63px;background:#dfdfdf;border:2px solid #c4c4c4;border-radius:4px;box-sizing:border-box"></div>
<svg class="a" style="left:2167px;top:578px" width="32" height="32" viewBox="0 0 16 16" fill="#000"><path fill="none" stroke="#000" stroke-width="1" d="M4.100 2.600h9v12h-9z"/><path d="M5.750 2.100h5.850V4H5.750z"/><circle cx="8.600" cy="2.300" r="1.500"/><circle cx="8.600" cy="2.400" r=".6" fill="#dfdfdf"/></svg>
<div class="a" style="left:2211px;top:564px;width:2px;height:59px;background:#c4c4c4"></div>
<svg class="a" style="left:2225px;top:578px" width="32" height="32" viewBox="0 0 16 16" fill="#000"><g fill="none" stroke="#000" stroke-width="1.100"><ellipse cx="5.300" cy="2.900" rx="1.800" ry="2.200" transform="rotate(-35 5.300 2.900)"/><ellipse cx="5.100" cy="13.300" rx="1.800" ry="2.200" transform="rotate(35 5.100 13.300)"/></g><path stroke="#000" stroke-width="2.100" d="M6.300 4.800L15.200 12.200M6.300 11.400L15.200 3.800"/><path stroke="#000" stroke-width="1.600" d="M6.200 4.600v6.800"/><circle cx="7.600" cy="8.200" r=".9" fill="#dfdfdf"/></svg>
<div class="a" style="left:1638px;top:680px;width:60px;height:63px;background:#dfdfdf;border:2px solid #c4c4c4;border-radius:4px;box-sizing:border-box"></div>
<svg class="a" style="left:1652px;top:696px" width="32" height="32" viewBox="0 0 16 16" fill="none"><path fill="#f4f4f4" stroke="#a6a6a6" stroke-width="1" d="M2.500.5h6l3.400 3.400v11.600H2.500z"/><path fill="#fff" stroke="#a6a6a6" stroke-width=".8" d="M8.500.5v3.400h3.400"/><circle cx="10.500" cy="10.400" r="5.300" fill="#5a9cf8" stroke="#4a86d8" stroke-width=".6"/><path fill="#a8cf45" d="M7.600 6.800c1 .1 1.900.7 2.300 1.500-.4.4-1.100.2-1.500.8-.2.400.3.900.7 1 .6.2 1 .7.8 1.300-.3.900-.9 1.600-1.400 2.300-.4-.9-.3-1.800-.9-2.400-.6-.4-1.100-.9-.9-1.700.1-.4.500-.6.800-.9-.3-.3-.9-.1-1.200-.5.400-.5.900-1 1.300-1.400z M11.200 5.600c1.600.2 3 1.200 3.700 2.500-.5 0-1 .1-1.300.5-.3.300-.9.100-1.200-.2-.3-.4-1-.4-1.300-.8.1-.6.600-1.100.1-2z M12.800 10.600c.6-.1 1.300.2 1.700.7.2.8-.2 1.700-.8 2.300-.4-.3-.5-.9-.8-1.400-.1-.5-.4-1.100-.1-1.600z"/></svg>
<div class="a" style="left:1638px;top:800px;width:60px;height:63px;background:#dfdfdf;border:2px solid #c4c4c4;border-radius:4px;box-sizing:border-box"></div>
<svg class="a" style="left:1652px;top:816px" width="32" height="32" viewBox="0 0 16 16" fill="none"><path fill="#f4f4f4" stroke="#a6a6a6" stroke-width="1" d="M2.500.5h6l3.400 3.400v11.600H2.500z"/><path fill="#fff" stroke="#a6a6a6" stroke-width=".8" d="M8.500.5v3.400h3.400"/><circle cx="10.500" cy="10.400" r="5.300" fill="#5a9cf8" stroke="#4a86d8" stroke-width=".6"/><path fill="#a8cf45" d="M7.600 6.800c1 .1 1.900.7 2.300 1.500-.4.4-1.100.2-1.500.8-.2.400.3.900.7 1 .6.2 1 .7.8 1.300-.3.900-.9 1.600-1.400 2.300-.4-.9-.3-1.800-.9-2.400-.6-.4-1.100-.9-.9-1.700.1-.4.500-.6.800-.9-.3-.3-.9-.1-1.200-.5.400-.5.900-1 1.300-1.400z M11.200 5.600c1.600.2 3 1.200 3.700 2.500-.5 0-1 .1-1.300.5-.3.300-.9.100-1.200-.2-.3-.4-1-.4-1.300-.8.1-.6.600-1.100.1-2z M12.800 10.600c.6-.1 1.300.2 1.700.7.2.8-.2 1.700-.8 2.300-.4-.3-.5-.9-.8-1.400-.1-.5-.4-1.100-.1-1.600z"/></svg>
<div class="a" style="left:1722px;top:680px;width:408px;height:63px;background:#dfdfdf;border:2px solid #c4c4c4;border-radius:4px;box-sizing:border-box"></div>
<div class="a" style="left:1724px;top:682px;width:57px;height:59px;background:#e7e7e7;border-radius:2px 0 0 2px"></div>
<div class="a" style="left:1780px;top:682px;width:2px;height:59px;background:#c4c4c4"></div>
<svg class="a" style="left:1794px;top:696px" width="32" height="32" viewBox="0 0 16 16" fill="#000"><path d="M1.350 15.100v-3.400L9.700 3.500l3.150 3.300-8.200 8.300z"/><path d="M10.500 2.800L12.300 1l3.200 3.200-1.800 1.900z"/><path fill="#dfdfdf" d="M3.200 12.300l6.300-6.200.4.4-6.300 6.200z"/></svg>
<div class="a" style="left:1838px;top:682px;width:2px;height:59px;background:#c4c4c4"></div>
<svg class="a" style="left:1852px;top:696px" width="32" height="32" viewBox="0 0 16 16" fill="#000"><path fill="none" stroke="#000" stroke-width="1" d="M5.500 14.600H1.900V1.600h12.700v6.800"/><rect x="3.250" y="3.200" width="10" height="1.700"/><rect x="3.250" y="6.100" width="10" height=".9"/><rect x="3.250" y="8.100" width="6" height=".9"/><rect x="3.250" y="10" width="1" height=".9"/><rect x="3.250" y="12" width="1" height=".9"/><ellipse cx="11.300" cy="12.500" rx="4.400" ry="2.900" fill="#dfdfdf" stroke="#000" stroke-width="1"/><circle cx="11.300" cy="12" r="1.900"/></svg>
<div class="a" style="left:1896px;top:682px;width:2px;height:59px;background:#c4c4c4"></div>
<svg class="a" style="left:1910px;top:696px" width="32" height="32" viewBox="0 0 16 16" fill="#000"><path fill="none" stroke="#000" stroke-width="1" d="M9.400 1.100h5.600v5.500H9.400zM1.800 8.900h5.600v5.600H1.800zM1.500 6V3.800h4.500M14.700 9.500v2.700H10.400"/><path d="M5.800 1.800l2.300 2-2.300 2zM10.600 10.300l-2.300 2 2.300 2z"/><text x="12.200" y="5.700" font-size="5" font-weight="700" text-anchor="middle" font-family="Liberation Sans">B</text><text x="4.600" y="13.500" font-size="5" font-weight="700" text-anchor="middle" font-family="Liberation Sans">A</text></svg>
<div class="a" style="left:1954px;top:682px;width:2px;height:59px;background:#c4c4c4"></div>
<svg class="a" style="left:1968px;top:696px" width="32" height="32" viewBox="0 0 16 16" fill="#000"><path fill="none" stroke="#000" stroke-width="1" d="M8.300 4.600H.750v6.800h7.550M10.100 4.600h5.150v6.800h-5.150"/><rect x="2.100" y="6.100" width="5.900" height="3.900"/><rect x="9.100" y="2.100" width="1" height="11.800"/><rect x="8.100" y="2.100" width="3" height="1"/><rect x="8.100" y="12.900" width="3" height="1"/></svg>
<div class="a" style="left:2012px;top:682px;width:2px;height:59px;background:#c4c4c4"></div>
<svg class="a" style="left:2026px;top:696px" width="32" height="32" viewBox="0 0 16 16" fill="#000"><path d="M7.250 2.100h2v1.900h-2zM6.300 6.200h2.950v5.900h1.950v2H5.200v-2h2.050V8H6.300z"/></svg>
<div class="a" style="left:2070px;top:682px;width:2px;height:59px;background:#c4c4c4"></div>
<svg class="a" style="left:2084px;top:696px" width="32" height="32" viewBox="0 0 16 16" fill="#000"><rect x="2.150" y="3" width="12.100" height="1"/><path fill="none" stroke="#000" stroke-width="1" d="M5.750 3V1.700h4.900V3M3.700 4v9.600c0 .8.500 1.300 1.300 1.300h6.400c.8 0 1.300-.5 1.300-1.300V4"/><rect x="6" y="5.300" width="1" height="7.700"/><rect x="9.400" y="5.300" width="1" height="7.700"/></svg>
<div class="a" style="left:2153px;top:680px;width:118px;height:63px;background:#dfdfdf;border:2px solid #c4c4c4;border-radius:4px;box-sizing:border-box"></div>
<svg class="a" style="left:2167px;top:696px" width="32" height="32" viewBox="0 0 16 16" fill="#000"><path fill="none" stroke="#000" stroke-width="1" d="M4.100 2.600h9v12h-9z"/><path d="M5.750 2.100h5.850V4H5.750z"/><circle cx="8.600" cy="2.300" r="1.500"/><circle cx="8.600" cy="2.400" r=".6" fill="#dfdfdf"/></svg>
<div class="a" style="left:2211px;top:682px;width:2px;height:59px;background:#c4c4c4"></div>
<svg class="a" style="left:2225px;top:696px" width="32" height="32" viewBox="0 0 16 16" fill="#000"><g fill="none" stroke="#000" stroke-width="1.100"><ellipse cx="5.300" cy="2.900" rx="1.800" ry="2.200" transform="rotate(-35 5.300 2.900)"/><ellipse cx="5.100" cy="13.300" rx="1.800" ry="2.200" transform="rotate(35 5.100 13.300)"/></g><path stroke="#000" stroke-width="2.100" d="M6.300 4.800L15.200 12.200M6.300 11.400L15.200 3.800"/><path stroke="#000" stroke-width="1.600" d="M6.200 4.600v6.800"/><circle cx="7.600" cy="8.200" r=".9" fill="#dfdfdf"/></svg>
<div class="a" style="left:1722px;top:800px;width:408px;height:63px;background:#dfdfdf;border:2px solid #c4c4c4;border-radius:4px;box-sizing:border-box"></div>
<svg class="a" style="left:1736px;top:816px" width="32" height="32" viewBox="0 0 16 16" fill="#000"><path fill="none" stroke="#000" stroke-width="1" d="M5.600 14.600H2.900V1.700h7.100l2.900 2.900v1.600M12.900 12.500v2.100h-1.400"/><path d="M9.600 1.800v3.400h3.300z" fill="none" stroke="#000" stroke-width=".9"/><path d="M4.600 13.500l5.400-5.400 1.900 1.900-5.400 5.400H4.600z"/><path d="M10.600 7.400l1.100-1.100 1.900 1.900-1.100 1.100z"/></svg>
<div class="a" style="left:1780px;top:802px;width:2px;height:59px;background:#c4c4c4"></div>
<svg class="a" style="left:1794px;top:816px" width="32" height="32" viewBox="0 0 16 16" fill="#000"><path d="M1.350 15.100v-3.400L9.700 3.500l3.150 3.300-8.200 8.300z"/><path d="M10.500 2.800L12.300 1l3.200 3.200-1.800 1.900z"/><path fill="#dfdfdf" d="M3.200 12.300l6.300-6.200.4.4-6.300 6.200z"/></svg>
<div class="a" style="left:1838px;top:802px;width:2px;height:59px;background:#c4c4c4"></div>
<svg class="a" style="left:1852px;top:816px" width="32" height="32" viewBox="0 0 16 16" fill="#000"><path fill="none" stroke="#000" stroke-width="1" d="M5.500 14.600H1.900V1.600h12.700v6.800"/><rect x="3.250" y="3.200" width="10" height="1.700"/><rect x="3.250" y="6.100" width="10" height=".9"/><rect x="3.250" y="8.100" width="6" height=".9"/><rect x="3.250" y="10" width="1" height=".9"/><rect x="3.250" y="12" width="1" height=".9"/><ellipse cx="11.300" cy="12.500" rx="4.400" ry="2.900" fill="#dfdfdf" stroke="#000" stroke-width="1"/><circle cx="11.300" cy="12" r="1.900"/></svg>
<div class="a" style="left:1896px;top:802px;width:2px;height:59px;background:#c4c4c4"></div>
<svg class="a" style="left:1910px;top:816px" width="32" height="32" viewBox="0 0 16 16" fill="#000"><path fill="none" stroke="#000" stroke-width="1" d="M9.400 1.100h5.600v5.500H9.400zM1.800 8.900h5.600v5.600H1.800zM1.500 6V3.800h4.500M14.700 9.500v2.700H10.400"/><path d="M5.800 1.800l2.300 2-2.300 2zM10.600 10.300l-2.300 2 2.300 2z"/><text x="12.200" y="5.700" font-size="5" font-weight="700" text-anchor="middle" font-family="Liberation Sans">B</text><text x="4.600" y="13.500" font-size="5" font-weight="700" text-anchor="middle" font-family="Liberation Sans">A</text></svg>
<div class="a" style="left:1954px;top:802px;width:2px;height:59px;background:#c4c4c4"></div>
<svg class="a" style="left:1968px;top:816px" width="32" height="32" viewBox="0 0 16 16" fill="#000"><path fill="none" stroke="#000" stroke-width="1" d="M8.300 4.600H.750v6.800h7.550M10.100 4.600h5.150v6.800h-5.150"/><rect x="2.100" y="6.100" width="5.900" height="3.900"/><rect x="9.100" y="2.100" width="1" height="11.800"/><rect x="8.100" y="2.100" width="3" height="1"/><rect x="8.100" y="12.900" width="3" height="1"/></svg>
<div class="a" style="left:2012px;top:802px;width:2px;height:59px;background:#c4c4c4"></div>
<svg class="a" style="left:2026px;top:816px" width="32" height="32" viewBox="0 0 16 16" fill="#000"><path d="M7.250 2.100h2v1.900h-2zM6.300 6.200h2.950v5.900h1.950v2H5.200v-2h2.050V8H6.300z"/></svg>
<div class="a" style="left:2070px;top:802px;width:2px;height:59px;background:#c4c4c4"></div>
<svg class="a" style="left:2084px;top:816px" width="32" height="32" viewBox="0 0 16 16" fill="#000"><rect x="2.150" y="3" width="12.100" height="1"/><path fill="none" stroke="#000" stroke-width="1" d="M5.750 3V1.700h4.900V3M3.700 4v9.600c0 .8.500 1.300 1.300 1.300h6.400c.8 0 1.300-.5 1.300-1.300V4"/><rect x="6" y="5.300" width="1" height="7.700"/><rect x="9.400" y="5.300" width="1" height="7.700"/></svg>
<div class="a" style="left:2153px;top:800px;width:118px;height:63px;background:#dfdfdf;border:2px solid #c4c4c4;border-radius:4px;box-sizing:border-box"></div>
<svg class="a" style="left:2167px;top:816px" width="32" height="32" viewBox="0 0 16 16" fill="#000"><path fill="none" stroke="#000" stroke-width="1" d="M4.100 2.600h9v12h-9z"/><path d="M5.750 2.100h5.850V4H5.750z"/><circle cx="8.600" cy="2.300" r="1.500"/><circle cx="8.600" cy="2.400" r=".6" fill="#dfdfdf"/></svg>
<div class="a" style="left:2211px;top:802px;width:2px;height:59px;background:#c4c4c4"></div>
<svg class="a" style="left:2225px;top:816px" width="32" height="32" viewBox="0 0 16 16" fill="#000"><g fill="none" stroke="#000" stroke-width="1.100"><ellipse cx="5.300" cy="2.900" rx="1.800" ry="2.200" transform="rotate(-35 5.300 2.900)"/><ellipse cx="5.100" cy="13.300" rx="1.800" ry="2.200" transform="rotate(35 5.100 13.300)"/></g><path stroke="#000" stroke-width="2.100" d="M6.300 4.800L15.200 12.200M6.300 11.400L15.200 3.800"/><path stroke="#000" stroke-width="1.600" d="M6.200 4.600v6.800"/><circle cx="7.600" cy="8.200" r=".9" fill="#dfdfdf"/></svg>
<svg class="a" style="left:776px;top:922px" width="24" height="24" viewBox="0 0 24 24"><rect width="24" height="24" rx="4" fill="#4a89f3"/><path fill="none" stroke="#fff" stroke-width="2.400" d="M5.500 12.300l4.300 5L18.500 6.500"/></svg>
<svg class="a" style="left:776px;top:968px" width="24" height="24" viewBox="0 0 24 24"><rect width="24" height="24" rx="4" fill="#4a89f3"/><path fill="none" stroke="#fff" stroke-width="2.400" d="M5.500 12.300l4.300 5L18.500 6.500"/></svg>
<svg class="a" style="left:776px;top:1014px" width="24" height="24" viewBox="0 0 24 24"><rect width="24" height="24" rx="4" fill="#4a89f3"/><path fill="none" stroke="#fff" stroke-width="2.400" d="M5.500 12.300l4.300 5L18.500 6.500"/></svg>
<div class="a t" style="left:815.50px;top:919.20px;font-size:25.4px;font-weight:400;color:#111;letter-spacing:0.791px;">Extended view</div>
<div class="a t" style="left:815.50px;top:965.00px;font-size:25.4px;font-weight:400;color:#111;letter-spacing:1.006px;">Display thumbnails</div>
<div class="a t" style="left:816.50px;top:1011.10px;font-size:25.4px;font-weight:400;color:#111;letter-spacing:0.763px;">Show clipboard</div>
<div class="a" style="left:776px;top:1090px;width:2055px;height:418px;border:2px solid #c8c8c8;border-radius:4px;box-sizing:border-box;background:#fafafa;box-shadow:0 4px 0 #e4e4e4"></div>
<div class="a" style="left:778px;top:1092px;width:2051px;height:77px;background:#dedede;border-radius:2px 2px 0 0"></div>
<div class="a" style="left:778px;top:1169px;width:2051px;height:2px;background:#c8c8c8"></div>
<div class="a t b" style="left:807.40px;top:1117.30px;font-size:25.4px;font-weight:700;color:#555;letter-spacing:1.366px;">Clipboard</div>
<div class="a" style="left:790px;top:1182px;width:234px;height:64px;background:#dedede;border:2px solid #bbbbbb;border-radius:4px;box-sizing:border-box"></div>
<div class="a t" style="left:803.00px;top:1201.20px;font-size:25.4px;font-weight:400;color:#333;letter-spacing:0.869px;">Move elements</div>
<svg class="a" style="left:994px;top:1210px;" width="16" height="10" viewBox="0 0 16 10"><path fill="#333" d="M0 0h16L8 10z"/></svg>
<div class="a" style="left:778px;top:1258px;width:2051px;height:2px;background:#c8c8c8"></div>
<div class="a" style="left:778px;top:1320px;width:2051px;height:2px;background:#c8c8c8"></div>
<div class="a" style="left:778px;top:1382px;width:2051px;height:2px;background:#c8c8c8"></div>
<div class="a" style="left:778px;top:1444px;width:2051px;height:2px;background:#c8c8c8"></div>
<svg class="a" style="left:794px;top:1278px;" width="24" height="24" viewBox="0 0 24 24"><circle cx="12" cy="12" r="12" fill="#1a1a1a"/><path fill="none" stroke="#fff" stroke-width="3" d="M6.500 12.200l3.800 3.800 7.200-7.600"/></svg>
<div class="a t b" style="left:834.30px;top:1277.30px;font-size:25.4px;font-weight:700;color:#1a1a1a;letter-spacing:1.719px;">Normal (single record mode)</div>
<svg class="a" style="left:794px;top:1341px;" width="24" height="24" viewBox="0 0 24 24"><circle cx="12" cy="12" r="9.900" fill="none" stroke="#1a1a1a" stroke-width="4"/></svg>
<div class="a t" style="left:825.60px;top:1338.50px;font-size:25.4px;font-weight:400;color:#777;letter-spacing:1.214px;">Clipboard #1 (multi-selection mode)</div>
<svg class="a" style="left:794px;top:1403px;" width="24" height="24" viewBox="0 0 24 24"><circle cx="12" cy="12" r="9.900" fill="none" stroke="#1a1a1a" stroke-width="4"/></svg>
<div class="a t" style="left:825.60px;top:1400.50px;font-size:25.4px;font-weight:400;color:#777;letter-spacing:1.214px;">Clipboard #2 (multi-selection mode)</div>
<svg class="a" style="left:794px;top:1465px;" width="24" height="24" viewBox="0 0 24 24"><circle cx="12" cy="12" r="9.900" fill="none" stroke="#1a1a1a" stroke-width="4"/></svg>
<div class="a t" style="left:825.60px;top:1462.50px;font-size:25.4px;font-weight:400;color:#777;letter-spacing:1.214px;">Clipboard #3 (multi-selection mode)</div>
<div class="a" style="left:776px;top:1544px;width:52px;height:51px;background:#eeeeee;border:2px solid #bbbbbb;border-radius:4px;box-sizing:border-box"></div>
<svg class="a" style="left:786px;top:1553px;" width="32" height="32" viewBox="0 0 16 16"><path fill="none" stroke="#000" stroke-width="2" d="M6 6.500A2 2 0 1 1 9.300 8.100C8.400 8.800 8 9.300 8 10.400"/><rect x="7" y="11.500" width="2" height="2"/></svg>
<svg class="a" style="left:2624px;top:112px" width="32" height="32" viewBox="0 0 16 16"><path fill="#d8d8d8" d="M.5 1.200L2 .3v15.400L.5 14.800z"/><path fill="#a9a9a9" d="M2 .3h9.700v15.400H2z"/><rect x="4" y="3" width="6" height=".7" fill="#777"/><rect x="4" y="4.600" width="6" height=".7" fill="#777"/><rect x="3" y="7.300" width=".8" height=".8" fill="#5a9cf8"/><ellipse cx="10.450" cy="7.500" rx="3.100" ry="3.500" fill="#666"/><path fill="#666" d="M4.900 15.900C4.900 12.300 7 11.500 8.800 10.900h3.300c1.800.6 3.900 1.400 3.900 5z"/><ellipse cx="10.450" cy="7.400" rx="2.200" ry="2.600" fill="#f5c66a"/><rect x="9.500" y="9" width="1.900" height="2.800" fill="#f5c66a"/><path fill="#87a752" d="M5.800 15.100c.2-2.300 1.700-3 3.400-3.500l1.250.7 1.250-.7c1.700.5 3.200 1.200 3.400 3.500z"/></svg>
</div>
<div class="a" style="left:0;top:0;width:2876px;height:1598px;border:2px solid rgba(255,255,255,.21);border-top:0;border-radius:0 0 11px 11px;pointer-events:none"></div>
</body></html>
